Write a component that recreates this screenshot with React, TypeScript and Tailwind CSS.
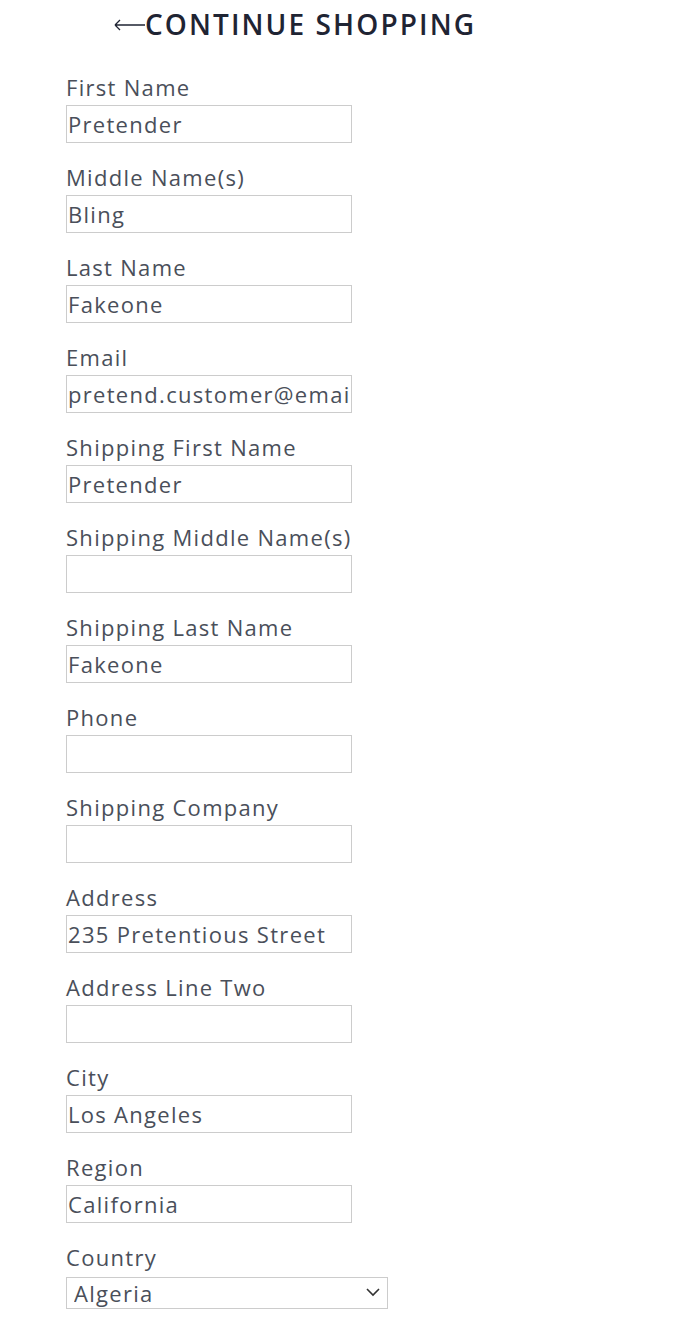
import React from "react";

const fields: { label: string; value: string }[] = [
  { label: "First Name", value: "Pretender" },
  { label: "Middle Name(s)", value: "Bling" },
  { label: "Last Name", value: "Fakeone" },
  { label: "Email", value: "pretend.customer@email.com" },
  { label: "Shipping First Name", value: "Pretender" },
  { label: "Shipping Middle Name(s)", value: "" },
  { label: "Shipping Last Name", value: "Fakeone" },
  { label: "Phone", value: "" },
  { label: "Shipping Company", value: "" },
  { label: "Address", value: "235 Pretentious Street" },
  { label: "Address Line Two", value: "" },
  { label: "City", value: "Los Angeles" },
  { label: "Region", value: "California" },
];

const font = { fontFamily: '"Open Sans", "Liberation Sans", sans-serif', letterSpacing: "1.3px" };

export default function App() {
  return (
    <div className="bg-white min-h-screen text-[#4a4f5a]" style={font}>
      <div className="pl-[114px] pt-[4px] h-[44px] flex items-center">
        <svg width="31" height="12" viewBox="0 0 31 12" className="mt-[2px]">
          <path d="M1 6h30M1 6l5-5M1 6l5 5" fill="none" stroke="#1f2433" strokeWidth="1.3" />
        </svg>
        <span className="text-[28px] font-semibold text-[#1f2433] tracking-[2.1px] leading-none">CONTINUE SHOPPING</span>
      </div>
      <form className="pl-[66px] pt-[30px] flex flex-col">
        {fields.map((f) => (
          <div key={f.label} className="flex flex-col mb-[21px]">
            <label className="text-[22px] leading-[27px] h-[27px] mb-[4px]">{f.label}</label>
            <input
              readOnly
              value={f.value}
              className="w-[286px] h-[38px] border border-[#cccccc] px-[1px] text-[22px] text-[#4a4f5a] outline-none"
              style={font}
            />
          </div>
        ))}
        <div className="flex flex-col">
          <label className="text-[22px] leading-[27px] h-[27px] mb-[4px]">Country</label>
          <div className="relative w-[322px] h-[32px] mt-[2px]">
            <select
              className="appearance-none w-full h-full border border-[#cccccc] pl-[7px] text-[22px] leading-[28px] text-[#4a4f5a] bg-white outline-none"
              style={font}
              defaultValue="Algeria"
            >
              <option>Algeria</option>
            </select>
            <svg className="absolute right-[8px] top-[11px] pointer-events-none" width="14" height="9" viewBox="0 0 14 9">
              <path d="M1 1l6 6 6-6" fill="none" stroke="#333" strokeWidth="1.6" />
            </svg>
          </div>
        </div>
      </form>
    </div>
  );
}
